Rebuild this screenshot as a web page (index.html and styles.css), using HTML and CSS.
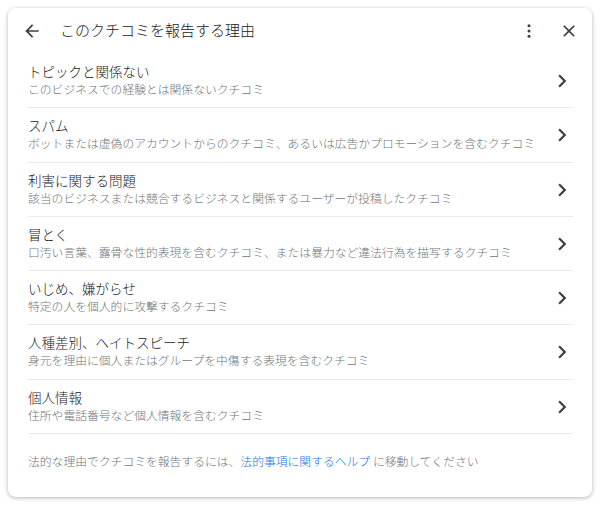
FILE: index.html
```html
<!DOCTYPE html>
<html lang="ja">
<head>
    <meta charset="UTF-8">
    <meta name="viewport" content="width=device-width, initial-scale=1.0">
    <title>クチコミを報告</title>
    <link rel="stylesheet" href="styles.css">
</head>
<body>
    <div class="dialog">
        <div class="dialog-header">
            <button class="icon-btn back-btn" aria-label="戻る">
                <svg width="20" height="20" viewBox="0 0 24 24"><path d="M20 11H7.83l5.59-5.59L12 4l-8 8 8 8 1.41-1.41L7.83 13H20v-2z"/></svg>
            </button>
            <h1 class="dialog-title">このクチコミを報告する理由</h1>
            <button class="icon-btn more-btn" aria-label="その他">
                <svg width="18" height="18" viewBox="0 0 24 24"><circle cx="12" cy="5" r="2"/><circle cx="12" cy="12" r="2"/><circle cx="12" cy="19" r="2"/></svg>
            </button>
            <button class="icon-btn close-btn" aria-label="閉じる">
                <svg width="20" height="20" viewBox="0 0 24 24"><path d="M19 6.41L17.59 5 12 10.59 6.41 5 5 6.41 10.59 12 5 17.59 6.41 19 12 13.41 17.59 19 19 17.59 13.41 12z"/></svg>
            </button>
        </div>

        <ul class="reason-list">
            <li class="reason">
                <div class="reason-text">
                    <div class="reason-title">トピックと関係ない</div>
                    <div class="reason-desc">このビジネスでの経験とは関係ないクチコミ</div>
                </div>
                <svg class="chevron" width="26" height="26" viewBox="0 0 24 24"><path d="M10 6L8.59 7.41 13.17 12l-4.58 4.59L10 18l6-6z"/></svg>
            </li>
            <li class="reason">
                <div class="reason-text">
                    <div class="reason-title">スパム</div>
                    <div class="reason-desc">ボットまたは虚偽のアカウントからのクチコミ、あるいは広告かプロモーションを含むクチコミ</div>
                </div>
                <svg class="chevron" width="26" height="26" viewBox="0 0 24 24"><path d="M10 6L8.59 7.41 13.17 12l-4.58 4.59L10 18l6-6z"/></svg>
            </li>
            <li class="reason">
                <div class="reason-text">
                    <div class="reason-title">利害に関する問題</div>
                    <div class="reason-desc">該当のビジネスまたは競合するビジネスと関係するユーザーが投稿したクチコミ</div>
                </div>
                <svg class="chevron" width="26" height="26" viewBox="0 0 24 24"><path d="M10 6L8.59 7.41 13.17 12l-4.58 4.59L10 18l6-6z"/></svg>
            </li>
            <li class="reason">
                <div class="reason-text">
                    <div class="reason-title">冒とく</div>
                    <div class="reason-desc">口汚い言葉、露骨な性的表現を含むクチコミ、または暴力など違法行為を描写するクチコミ</div>
                </div>
                <svg class="chevron" width="26" height="26" viewBox="0 0 24 24"><path d="M10 6L8.59 7.41 13.17 12l-4.58 4.59L10 18l6-6z"/></svg>
            </li>
            <li class="reason">
                <div class="reason-text">
                    <div class="reason-title">いじめ、嫌がらせ</div>
                    <div class="reason-desc">特定の人を個人的に攻撃するクチコミ</div>
                </div>
                <svg class="chevron" width="26" height="26" viewBox="0 0 24 24"><path d="M10 6L8.59 7.41 13.17 12l-4.58 4.59L10 18l6-6z"/></svg>
            </li>
            <li class="reason">
                <div class="reason-text">
                    <div class="reason-title">人種差別、ヘイトスピーチ</div>
                    <div class="reason-desc">身元を理由に個人またはグループを中傷する表現を含むクチコミ</div>
                </div>
                <svg class="chevron" width="26" height="26" viewBox="0 0 24 24"><path d="M10 6L8.59 7.41 13.17 12l-4.58 4.59L10 18l6-6z"/></svg>
            </li>
            <li class="reason">
                <div class="reason-text">
                    <div class="reason-title">個人情報</div>
                    <div class="reason-desc">住所や電話番号など個人情報を含むクチコミ</div>
                </div>
                <svg class="chevron" width="26" height="26" viewBox="0 0 24 24"><path d="M10 6L8.59 7.41 13.17 12l-4.58 4.59L10 18l6-6z"/></svg>
            </li>
        </ul>

        <p class="legal-note">法的な理由でクチコミを報告するには、<a href="#">法的事項に関するヘルプ</a> に移動してください</p>
    </div>
</body>
</html>
```

FILE: styles.css
```css
* {
    margin: 0;
    padding: 0;
    box-sizing: border-box;
}
:root {
    --text-main: #3c4043;
    --text-sub: #70757a;
    --divider: #e8eaed;
    --link: #1a73e8;
    --font: Roboto, "Noto Sans CJK JP", sans-serif;
}
body {
    background-color: #fff;
    font-family: var(--font);
    padding: 8px;
}
.dialog {
    width: 584px;
    height: 489px;
    background: #fff;
    border-radius: 8px;
    box-shadow: 0 1px 4px rgba(0, 0, 0, 0.3);
}
.dialog-header {
    display: flex;
    align-items: center;
    height: 46px;
    padding: 0 13px 0 14px;
}
.icon-btn {
    border: none;
    background: none;
    display: flex;
    align-items: center;
    justify-content: center;
    fill: #3c4043;
}
.dialog-title {
    flex: 1;
    margin-left: 18px;
    font-size: 15px;
    font-weight: 300;
    color: #202124;
    line-height: 20px;
}
.more-btn {
    margin-right: 21px;
}
.reason-list {
    list-style: none;
    padding: 0 19px 0 20px;
}
.reason {
    display: flex;
    align-items: center;
    padding: 9px 0 8.3px;
    border-bottom: 1px solid var(--divider);
}
.reason-text {
    flex: 1;
}
.reason-title {
    font-size: 13.5px;
    font-weight: 300;
    line-height: 18px;
    color: #202124;
}
.reason-desc {
    font-size: 11.8px;
    font-weight: 300;
    line-height: 18px;
    color: var(--text-sub);
}
.chevron {
    fill: #3c4043;
    margin-right: -2px;
}
.legal-note {
    padding: 19px 20px 0;
    font-size: 11.8px;
    font-weight: 300;
    line-height: 18px;
    color: var(--text-sub);
}
.legal-note a {
    color: var(--link);
    text-decoration: none;
}
```
